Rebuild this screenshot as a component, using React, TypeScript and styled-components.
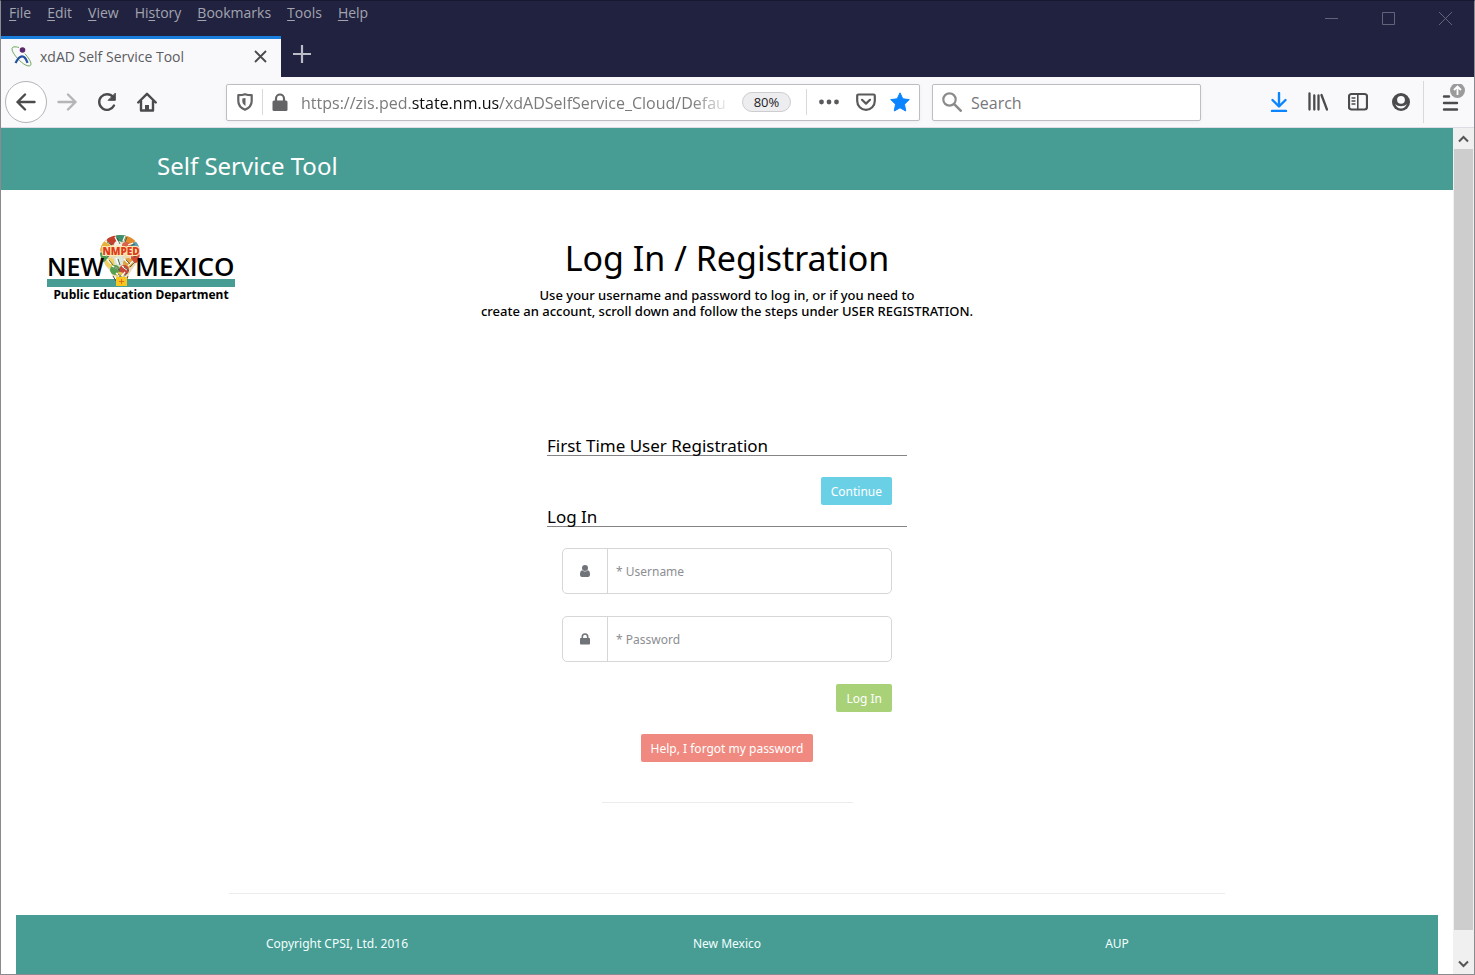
import React from "react";
import styled, { createGlobalStyle } from "styled-components";

const teal = "#479c94";
const chromeFont = '"Open Sans", "Noto Sans", sans-serif';
const pageFont = '"Noto Sans", "Open Sans", sans-serif';

const GlobalStyle = createGlobalStyle`
  *, *::before, *::after { box-sizing: border-box; }
  body { margin: 0; background: #fff; font-family: ${pageFont}; color: #000; }
  button, input { font: inherit; }
  button { cursor: pointer; }
`;

const Window = styled.div`
  display: flex;
  flex-direction: column;
  min-height: 100vh;
  border: 1px solid #8b8b8f;
  border-top-color: #17182f;
`;

/* ---------- browser chrome ---------- */

const TitleArea = styled.header`
  display: flex;
  justify-content: space-between;
  background: #20223f;
  font-family: ${chromeFont};
`;

const MenuBar = styled.nav`
  display: flex;
  gap: 16px;
  height: 35px;
  padding-left: 8px;
`;

const MenuItem = styled.button`
  height: 24px;
  padding: 0;
  border: 0;
  background: none;
  color: #a3a4b0;
  font-size: 14px;
  line-height: 24px;

  u { text-underline-offset: 2px; }
`;

const WindowControls = styled.div`
  display: flex;
  height: 35px;
`;

const WindowButton = styled.button`
  display: grid;
  place-items: center;
  width: 57px;
  height: 34px;
  padding: 0;
  border: 0;
  background: none;
  color: #62647a;
`;

const TabStrip = styled.div`
  display: flex;
  height: 41px;
`;

const Tab = styled.div`
  display: flex;
  align-items: center;
  width: 280px;
  padding: 0 11px 4px 10px;
  border-top: 3px solid #1a7fdc;
  background: #f9f9fb;
  color: #5c5c61;
`;

const TabTitle = styled.span`
  flex: 1;
  padding-left: 8px;
  font-size: 14px;
  white-space: nowrap;
`;

const IconButton = styled.button<{ $width?: number; $color?: string }>`
  display: grid;
  flex: none;
  place-items: center;
  width: ${(p) => p.$width ?? 40}px;
  height: 36px;
  padding: 0;
  border: 0;
  background: none;
  color: ${(p) => p.$color ?? "#4b4b4d"};
`;

const Toolbar = styled.div`
  display: flex;
  align-items: center;
  height: 51px;
  padding-left: 4px;
  border-bottom: 1px solid #dcdce2;
  background: #f9f9fb;
  font-family: ${chromeFont};
`;

const BackButton = styled(IconButton)`
  height: 42px;
  border: 1px solid #b4b4b8;
  border-radius: 50%;
  background: #fff;
`;

const ToolbarSpring = styled.div`
  flex: none;
  width: 59px;
`;

const Field = styled.div`
  display: flex;
  align-items: center;
  height: 37px;
  border: 1px solid #bebec2;
  border-radius: 2px;
  background: #fff;
  box-shadow: 0 1px 4px rgba(0, 0, 0, 0.05);
`;

const AddressField = styled(Field)`
  flex: 1;
  min-width: 0;
`;

const SearchField = styled(Field)`
  flex: none;
  width: 269px;
  margin-left: 12px;
`;

const SearchLabel = styled.label`
  display: grid;
  place-items: center;
  width: 38px;
  color: #8b8b8d;
`;

const SearchInput = styled.input`
  flex: 1;
  min-width: 0;
  padding: 2px 0 0;
  border: 0;
  outline: 0;
  background: none;
  font-size: 16px;

  &::placeholder { color: #77777a; opacity: 1; }
`;

const Divider = styled.span<{ $height: number }>`
  flex: none;
  width: 1px;
  height: ${(p) => p.$height}px;
  background: #d9d9dc;
`;

const Address = styled.div`
  flex: 1;
  min-width: 0;
  margin: 0 10px 0 4px;
  padding-top: 2px;
  overflow: hidden;
  outline: 0;
  color: #7b7b7e;
  font-size: 16px;
  line-height: 30px;
  white-space: nowrap;
  mask-image: linear-gradient(to left, transparent, #000 40px);

  b { color: #0c0c0d; font-weight: 400; }
`;

const ZoomBadge = styled.button`
  flex: none;
  width: 49px;
  height: 20px;
  margin-right: 15px;
  padding: 0;
  border: 1px solid #cdcdcf;
  border-radius: 10px;
  background: #ededf0;
  color: #1c1c1e;
  font-size: 13px;
  line-height: 18px;
`;

/* ---------- page ---------- */

const Viewport = styled.div`
  display: flex;
  flex: 1;
`;

const Page = styled.div`
  display: flex;
  flex: 1;
  flex-direction: column;
  min-width: 0;
`;

const Banner = styled.div`
  height: 62px;
  background: ${teal};
`;

const Container = styled.div`
  width: 100%;
  max-width: 1170px;
  margin: 0 auto;
  padding: 0 15px;
`;

const BannerTitle = styled.div`
  padding-top: 20px;
  color: #fff;
  font-size: 24px;
  line-height: 36px;
`;

const Intro = styled.section`
  display: grid;
  grid-template-columns: 1fr auto 1fr;
  padding-top: 44px;
`;

const LogoLink = styled.a`
  display: block;
  width: 190px;
  height: 68px;
  margin-left: 45px;
`;

const Heading = styled.div`
  text-align: center;

  h1 {
    margin: 0;
    font-size: 34px;
    font-weight: 400;
    line-height: 48px;
  }

  p {
    margin: 5px 0 0;
    font-size: 13px;
    font-weight: 500;
    line-height: 16px;
  }
`;

const Form = styled.form`
  display: flex;
  flex-direction: column;
  width: 360px;
  margin: 116px auto 0;
`;

const SectionTitle = styled.h2`
  margin: 0 0 21px;
  padding-top: 2px;
  border-bottom: 1px solid #858588;
  font-size: 17px;
  font-weight: 400;
  line-height: 18px;
`;

const ButtonRow = styled.div<{ $center?: boolean; $after?: number }>`
  display: flex;
  justify-content: ${(p) => (p.$center ? "center" : "flex-end")};
  margin-bottom: ${(p) => p.$after ?? 0}px;
  padding: 0 15px;
`;

const ActionButton = styled.button<{ $tone: string }>`
  height: 28px;
  padding: 2px 10px 0;
  border: 0;
  border-radius: 2px;
  background: ${(p) => p.$tone};
  color: #fff;
  font-size: 12px;
  line-height: 26px;
`;

const InputGroup = styled.div`
  display: flex;
  height: 46px;
  margin: 0 15px 22px;
  border: 1px solid #d6d6d8;
  border-radius: 5px;
`;

const InputIcon = styled.label`
  display: grid;
  place-items: center;
  width: 45px;
  border-right: 1px solid #d6d6d8;
  color: #707377;
`;

const TextInput = styled.input`
  flex: 1;
  min-width: 0;
  padding: 0 8px;
  border: 0;
  outline: 0;
  background: none;
  font-size: 12px;

  &::placeholder { color: #8c8e92; opacity: 1; }
`;

const Rule = styled.hr<{ $width: number; $top: number }>`
  width: ${(p) => p.$width}px;
  max-width: 100%;
  margin: ${(p) => p.$top}px auto 0;
  border: 0;
  border-top: 1px solid #ececec;
`;

const Footer = styled.footer`
  flex: 1;
  margin: 21px 15px 0;
  background: ${teal};
`;

const FooterColumns = styled.div`
  display: grid;
  grid-template-columns: repeat(3, 1fr);
  max-width: 1170px;
  margin: 0 auto;
  padding: 19px 0;
  color: #f2fffd;
  font-size: 12px;
  line-height: 20px;
  text-align: center;

  a { color: inherit; text-decoration: none; }
`;

const ScrollBar = styled.div`
  display: flex;
  flex: none;
  flex-direction: column;
  width: 21px;
  padding: 0 1px;
  background: #f0f0f0;
`;

const ScrollButton = styled.button`
  display: grid;
  place-items: center;
  height: 21px;
  padding: 0;
  border: 0;
  background: #f0f0f0;
  color: #555;
`;

const ScrollThumb = styled.div`
  flex: 1;
  margin-bottom: 23px;
  background: #cdcdcd;
`;

/* ---------- drawings ---------- */

type IconProps = { size?: number; children: React.ReactNode };

const Stroke = ({ size = 20, children }: IconProps) => (
  <svg width={size} height={size} viewBox="0 0 20 20" fill="none" stroke="currentColor" strokeWidth="2.4" strokeLinecap="round" strokeLinejoin="round" aria-hidden="true">
    {children}
  </svg>
);

const Favicon = () => (
  <svg width="21" height="21" viewBox="0 0 21 21" fill="none" aria-hidden="true">
    <path d="M8 1.500C4 .4 1 .6 1 2.800c0 4 6 11 11.500 15 4 2.800 7.500 2.800 7.500.4 0-2.700-2.800-7-6.200-10.500" stroke="#6da85a" strokeWidth="1" />
    <circle cx="11.500" cy="4" r="2.800" fill="#5b2a6e" />
    <path d="M4.500 17C6.500 13 8.500 10.300 11 10.300s4.300 2.800 5.500 6.500" stroke="#2450a0" strokeWidth="2.200" />
  </svg>
);

const patches: [number, number, number, string][] = [
  [58, 12, 6, "#e8b13a"], [66, 6, 5, "#c33e2b"], [75, 3, 5, "#3f8f6c"], [84, 6, 5, "#e58b2c"],
  [90, 13, 5, "#5a9fb5"], [57, 23, 5, "#4f9a50"], [90, 24, 5, "#cf4b38"], [64, 29, 5, "#f0d060"],
  [73, 27, 5, "#d9e6dc"], [82, 29, 5, "#e2a13e"], [69, 36, 5, "#56a04f"], [78, 36, 5, "#c8493b"],
  [74, 42, 4, "#e9c451"], [72, 11, 4, "#f5ede0"], [80, 12, 4, "#d7654b"],
];

const flecks = "M59 7l5 3M69 3l3 6M79 2l-2 5M87 9l-5 2M56 18l5 4M91 19l-5 3M61 25l4 5M70 24l2 6M78 25l4 4M87 27l-5 5M66 32l6 3M76 32l5 4M70 39l4 3M79 38l-4 5";

const Logo = () => (
  <svg width="190" height="68" viewBox="0 0 190 68" role="img" aria-label="New Mexico Public Education Department">
    <defs>
      <clipPath id="balloon">
        <path d="M74 1c12 0 20 8 20 17.500 0 9-8 15-12 24H67c-4-9-13-15-13-24C54 9 62 1 74 1z" />
      </clipPath>
    </defs>
    <rect x="1" y="45" width="188" height="8" fill={teal} />
    <g clipPath="url(#balloon)">
      <rect x="53" width="43" height="44" fill="#ead9b6" />
      {patches.map(([x, y, r, fill]) => (
        <circle key={`${x}-${y}`} cx={x} cy={y} r={r} fill={fill} />
      ))}
      <path d={flecks} stroke="#fff" strokeWidth="1.300" />
      <path d={flecks} stroke="#38543c" strokeWidth=".8" transform="translate(2 1)" />
    </g>
    <path d="M67 42l3 5M82 42l-2 5M74 42v4" stroke="#5b4632" strokeWidth="1" />
    <rect x="70" y="43" width="11" height="9" fill="#f7c51e" />
    <path d="M75.500 45v5M73 47.500h5" stroke="#dd6b20" strokeWidth="1" />
    <g fontFamily={chromeFont}>
      <text x="75" y="21" fontSize="10" fontWeight="800" fill="#dd3b1c" stroke="#ffeab0" strokeWidth="2" paintOrder="stroke" textAnchor="middle">NMPED</text>
      <text x="1" y="42" fontSize="25" fontWeight="600">NEW</text>
      <text x="89" y="42" fontSize="26" fontWeight="600">MEXICO</text>
      <text x="95" y="65" fontSize="12" fontWeight="700" fontFamily={pageFont} textAnchor="middle">Public Education Department</text>
    </g>
  </svg>
);

const menus: [string, string, string][] = [
  ["", "F", "ile"], ["", "E", "dit"], ["", "V", "iew"], ["Hi", "s", "tory"],
  ["", "B", "ookmarks"], ["", "T", "ools"], ["", "H", "elp"],
];

export default function App() {
  return (
    <>
      <GlobalStyle />
      <Window>
        <TitleArea>
          <div>
            <MenuBar>
              {menus.map(([before, key, after]) => (
                <MenuItem key={before + key + after}>{before}<u>{key}</u>{after}</MenuItem>
              ))}
            </MenuBar>
            <TabStrip>
              <Tab>
                <Favicon />
                <TabTitle>xdAD Self Service Tool</TabTitle>
                <IconButton $width={20} aria-label="Close tab">
                  <svg width="13" height="13" viewBox="0 0 13 13" stroke="currentColor" strokeWidth="1.800"><path d="M1 1l11 11M12 1L1 12" /></svg>
                </IconButton>
              </Tab>
              <IconButton $width={42} $color="#bcbcc6" aria-label="New tab">
                <svg width="18" height="18" viewBox="0 0 18 18" stroke="currentColor" strokeWidth="2.200"><path d="M9 0v18M0 9h18" /></svg>
              </IconButton>
            </TabStrip>
          </div>
          <WindowControls>
            <WindowButton aria-label="Minimize"><svg width="13" height="13" stroke="currentColor"><path d="M0 6.500h13" /></svg></WindowButton>
            <WindowButton aria-label="Maximize"><svg width="13" height="13" fill="none" stroke="currentColor"><path d="M.5.5h12v12H.5z" /></svg></WindowButton>
            <WindowButton aria-label="Close"><svg width="13" height="13" stroke="currentColor"><path d="M0 0l13 13M13 0L0 13" /></svg></WindowButton>
          </WindowControls>
        </TitleArea>

        <Toolbar>
          <BackButton $width={42} aria-label="Back"><Stroke><path d="M18.500 10H1.500M9 2.500L1.500 10 9 17.500" /></Stroke></BackButton>
          <IconButton $color="#b5b5b8" aria-label="Forward"><Stroke><path d="M1.500 10h17M11 2.500l7.500 7.500-7.500 7.500" /></Stroke></IconButton>
          <IconButton aria-label="Reload">
            <Stroke><path d="M17 13.500A7.800 7.800 0 1 1 16 5" /><path d="M18.300 1.500v6.800h-6.800z" fill="currentColor" strokeWidth="1" /></Stroke>
          </IconButton>
          <IconButton aria-label="Home">
            <Stroke><path d="M1.200 10.500L10 1.800l8.800 8.700M4 9v9.500h12V9" /><path d="M10 18v-5" strokeWidth="4" strokeLinecap="butt" /></Stroke>
          </IconButton>
          <ToolbarSpring />
          <AddressField>
            <IconButton $width={35} $color="#646466" aria-label="Tracking protection">
              <svg width="16" height="18" viewBox="0 0 16 18" fill="none" stroke="currentColor" strokeWidth="2.200" strokeLinejoin="round"><path d="M8 1.200c2 .8 4.300 1 6.700 1V8c0 4-2.400 7-6.700 8.700C3.700 15 1.300 12 1.300 8V2.200c2.400 0 4.700-.2 6.700-1z" /><path d="M8.500 5v8C6.200 11.500 5.300 10 5.300 8V5.500z" fill="currentColor" stroke="none" /></svg>
            </IconButton>
            <Divider $height={26} />
            <IconButton $width={34} $color="#646466" aria-label="Connection secure">
              <svg width="16" height="18" viewBox="0 0 16 18"><rect x=".5" y="7.500" width="15" height="10.500" rx="1.500" fill="currentColor" /><path d="M4 9V5.500a4 4 0 0 1 8 0V9" fill="none" stroke="currentColor" strokeWidth="2.200" /></svg>
            </IconButton>
            <Address role="textbox" aria-label="Address">
              https://zis.ped.<b>state.nm.us</b>/xdADSelfService_Cloud/Defau
            </Address>
            <ZoomBadge>80%</ZoomBadge>
            <Divider $height={26} />
            <IconButton $width={44} $color="#5a5a5c" aria-label="Page actions">
              <svg width="20" height="6" viewBox="0 0 20 6" fill="currentColor"><circle cx="2.500" cy="3" r="2.400" /><circle cx="10" cy="3" r="2.400" /><circle cx="17.500" cy="3" r="2.400" /></svg>
            </IconButton>
            <IconButton $width={30} $color="#5a5a5c" aria-label="Save to Pocket">
              <svg width="20" height="18" viewBox="0 0 20 18" fill="none" stroke="currentColor" strokeWidth="2.200" strokeLinecap="round" strokeLinejoin="round"><path d="M2.500 1.500h15q1.300 0 1.300 1.300V8a8.800 8.800 0 0 1-17.600 0V2.800q0-1.300 1.300-1.300z" /><path d="M6 6.800l4 3.800 4-3.800" /></svg>
            </IconButton>
            <IconButton $width={38} $color="#0a84ff" aria-label="Edit bookmark">
              <svg width="20" height="20" viewBox="0 0 20 20" fill="currentColor" stroke="currentColor" strokeLinejoin="round"><path d="M10 .8l2.800 6 6.500.8-4.800 4.600 1.200 6.800-5.700-3.200L4.300 19l1.200-6.800L.7 7.600l6.500-.8z" /></svg>
            </IconButton>
          </AddressField>
          <SearchField>
            <SearchLabel htmlFor="browser-search">
              <svg width="20" height="20" viewBox="0 0 20 20" role="img" aria-label="Search the web" fill="none" stroke="currentColor" strokeWidth="2.200" strokeLinecap="round"><circle cx="7.500" cy="7.500" r="6.200" /><path d="M12.200 12.200l6.500 6.500" strokeWidth="2.600" /></svg>
            </SearchLabel>
            <SearchInput id="browser-search" placeholder="Search" />
          </SearchField>
          <ToolbarSpring />
          <IconButton $width={38} $color="#0a84ff" aria-label="Downloads"><Stroke><path d="M10 1v13M3.500 8L10 14.500 16.500 8M3 19h14" /></Stroke></IconButton>
          <IconButton aria-label="Library">
            <Stroke><path d="M1.500 1.500v16M6.300 3.500v14M10.500 3.500v14M13.500 3l5.500 14.500" strokeWidth="2.300" /></Stroke>
          </IconButton>
          <IconButton aria-label="Sidebars">
            <Stroke><rect x="1" y="2" width="18" height="15.500" rx="2.500" strokeWidth="2.200" /><path d="M9.800 2v15.500" strokeWidth="1.600" /><path d="M4 6h3M4 9h3M4 12h3" strokeWidth="1.300" /></Stroke>
          </IconButton>
          <IconButton $width={45} aria-label="Account">
            <svg width="18" height="18" viewBox="0 0 18 18"><circle cx="9" cy="9" r="9" fill="currentColor" /><circle cx="9" cy="6.800" r="3.900" fill="#f9f9fb" /><path d="M3.200 10.800C4.500 12.600 6.600 13.300 9 13.300s4.500-.7 5.800-2.500c-.8 2.900-3 4.700-5.800 4.700s-5-1.800-5.800-4.700z" fill="#f9f9fb" /></svg>
          </IconButton>
          <Divider $height={42} />
          <IconButton $width={50} aria-label="Open menu">
            <svg width="50" height="36" viewBox="0 0 50 36" fill="none"><path d="M20 12.500h5M20 19h13M20 25.500h13" stroke="currentColor" strokeWidth="2.400" strokeLinecap="round" /><circle cx="33.500" cy="6.500" r="7.500" fill="#9b9b9b" /><path d="M33.500 11V2.500M30 6l3.500-3.500L37 6" stroke="#fff" strokeWidth="1.800" /></svg>
          </IconButton>
        </Toolbar>

        <Viewport>
          <Page>
            <Banner>
              <Container><BannerTitle>Self Service Tool</BannerTitle></Container>
            </Banner>
            <main>
              <Intro>
                <LogoLink href="#home"><Logo /></LogoLink>
                <Heading>
                  <h1>Log In / Registration</h1>
                  <p>
                    Use your username and password to log in, or if you need to
                    <br />
                    create an account, scroll down and follow the steps under USER REGISTRATION.
                  </p>
                </Heading>
              </Intro>
              <Form onSubmit={(e) => e.preventDefault()}>
                <SectionTitle>First Time User Registration</SectionTitle>
                <ButtonRow $after={1}><ActionButton type="button" $tone="#6ad0e6">Continue</ActionButton></ButtonRow>
                <SectionTitle>Log In</SectionTitle>
                <InputGroup>
                  <InputIcon htmlFor="username">
                    <svg width="10" height="12" viewBox="0 0 10 12" role="img" aria-label="Username" fill="currentColor"><circle cx="5" cy="3" r="3" /><path d="M2.200 5.200A4 4 0 0 0 7.800 5.200C9.500 5.600 10 7.500 10 9.500 10 11 9.300 12 8 12H2C.7 12 0 11 0 9.500 0 7.500.5 5.600 2.200 5.200z" /></svg>
                  </InputIcon>
                  <TextInput id="username" placeholder="* Username" />
                </InputGroup>
                <InputGroup>
                  <InputIcon htmlFor="password">
                    <svg width="10" height="12" viewBox="0 0 10 12" role="img" aria-label="Password"><rect y="5" width="10" height="6.500" rx=".8" fill="currentColor" /><path d="M2.300 6V3.700a2.700 2.700 0 0 1 5.400 0V6" fill="none" stroke="currentColor" strokeWidth="1.600" /></svg>
                  </InputIcon>
                  <TextInput id="password" type="password" placeholder="* Password" />
                </InputGroup>
                <ButtonRow $after={22}><ActionButton type="submit" $tone="#a9d178">Log In</ActionButton></ButtonRow>
                <ButtonRow $center><ActionButton type="button" $tone="#f08a80">Help, I forgot my password</ActionButton></ButtonRow>
              </Form>
              <Rule $width={251} $top={40} />
              <Rule $width={996} $top={90} />
            </main>
            <Footer>
              <FooterColumns>
                <span>Copyright CPSI, Ltd. 2016</span>
                <span>New Mexico</span>
                <a href="#aup">AUP</a>
              </FooterColumns>
            </Footer>
          </Page>
          <ScrollBar>
            <ScrollButton aria-label="Scroll up"><svg width="11" height="8" fill="none" stroke="currentColor" strokeWidth="2"><path d="M1 6.500L5.500 2 10 6.500" /></svg></ScrollButton>
            <ScrollThumb />
            <ScrollButton aria-label="Scroll down"><svg width="11" height="8" fill="none" stroke="currentColor" strokeWidth="2"><path d="M1 1.500L5.500 6 10 1.500" /></svg></ScrollButton>
          </ScrollBar>
        </Viewport>
      </Window>
    </>
  );
}
